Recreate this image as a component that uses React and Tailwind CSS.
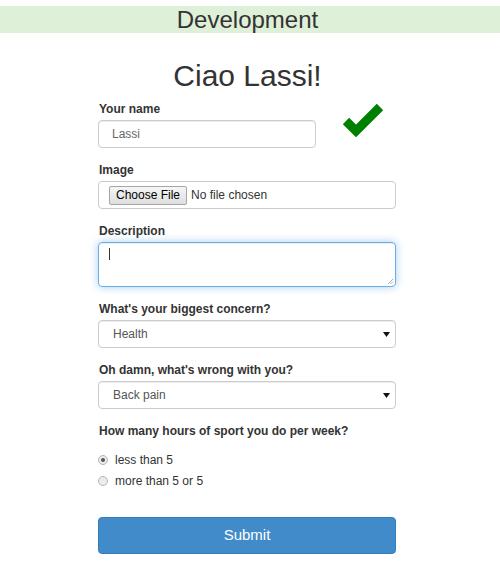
import React from "react";

const font = { fontFamily: '"Liberation Sans", Arial, Helvetica, sans-serif' };

function Label({ children, className = "" }) {
  return (
    <div className={"text-[12px] leading-[17px] font-bold text-[#333] mb-[2px] pl-px " + className}>
      {children}
    </div>
  );
}

function Select({ value }) {
  return (
    <div className="h-[28px] w-full border border-[#ccc] rounded-[4px] bg-white flex items-center justify-between pl-[14px] pr-[5px] shadow-[inset_0_1px_1px_rgba(0,0,0,0.075)]">
      <span className="text-[12px] text-[#555]">{value}</span>
      <svg width="7" height="5" viewBox="0 0 7 5">
        <path d="M0 0 H7 L3.5 5 Z" fill="#111" />
      </svg>
    </div>
  );
}

function Radio({ checked, children }) {
  return (
    <div className="h-[21px] flex items-center">
      <span className="w-[10px] h-[10px] rounded-full border border-[#b5b5b5] bg-[#ececec] flex items-center justify-center ml-[-1px]">
        {checked && <span className="w-[4px] h-[4px] rounded-full bg-[#555]" />}
      </span>
      <span className="ml-[7px] text-[12px] text-[#333]">{children}</span>
    </div>
  );
}

export default function App() {
  return (
    <div style={font} className="w-[500px] min-h-[571px] bg-white pt-[6px]">
      {/* banner */}
      <div className="h-[27px] bg-[#dff0d8] w-full">
        <div className="w-[495px] text-center text-[24px] leading-[27px] text-[#333]">
          Development
        </div>
      </div>

      <div className="w-[495px]">
        <h1 className="mt-[26px] text-center text-[30px] leading-[33px] text-[#333]">
          Ciao Lassi!
        </h1>

        <form className="w-[298px] mt-[9px] ml-[98px]">
          {/* name */}
          <div className="flex items-start mb-[14px]">
            <div className="w-[218px]">
              <Label>Your name</Label>
              <div className="h-[28px] border border-[#ccc] rounded-[4px] flex items-center pl-[13px] shadow-[inset_0_1px_1px_rgba(0,0,0,0.075)]">
                <span className="text-[12px] text-[#666]">Lassi</span>
              </div>
            </div>
            <svg width="46" height="38" viewBox="340 102 46 38" className="ml-[24px] mt-[1px]">
              <polyline
                points="346,121 356,131 380,107"
                fill="none"
                stroke="#008000"
                strokeWidth="9"
                strokeLinecap="butt"
                strokeLinejoin="miter"
              />
            </svg>
          </div>

          {/* image */}
          <div className="mb-[14px]">
            <Label>Image</Label>
            <div className="h-[28px] border border-[#ccc] rounded-[4px] flex items-center pl-[10px]">
              <span className="h-[19px] px-[6px] flex items-center border border-[#a6a6a6] rounded-[2px] bg-gradient-to-b from-[#f6f6f6] to-[#dedede] text-[12px] text-black">
                Choose File
              </span>
              <span className="ml-[4px] text-[12px] text-[#333]">No file chosen</span>
            </div>
          </div>

          {/* description */}
          <div className="mb-[14px]">
            <Label>Description</Label>
            <div className="relative h-[45px] border border-[#66afe9] rounded-[4px] shadow-[inset_0_1px_1px_rgba(0,0,0,0.075),0_0_8px_rgba(102,175,233,0.6)]">
              <span className="absolute left-[10px] top-[5px] w-px h-[12px] bg-[#333]" />
              <svg width="7" height="7" viewBox="0 0 7 7" className="absolute right-[1px] bottom-[1px]">
                <path d="M1 6 L6 1 M3.5 6 L6 3.5" stroke="#999" strokeWidth="0.8" />
              </svg>
            </div>
          </div>

          {/* concern */}
          <div className="mb-[14px]">
            <Label>What's your biggest concern?</Label>
            <Select value="Health" />
          </div>

          {/* wrong */}
          <div className="mb-[14px]">
            <Label>Oh damn, what's wrong with you?</Label>
            <Select value="Back pain" />
          </div>

          {/* sport */}
          <div>
            <Label className="mb-0">How many hours of sport you do per week?</Label>
            <div className="mt-[9px] pl-[1px]">
              <Radio checked>less than 5</Radio>
              <Radio>more than 5 or 5</Radio>
            </div>
          </div>

          <button
            type="button"
            className="mt-[26px] w-full h-[37px] rounded-[4px] bg-[#428bca] border border-[#357ebd] text-white text-[15px]"
          >
            Submit
          </button>
        </form>
      </div>
    </div>
  );
}
